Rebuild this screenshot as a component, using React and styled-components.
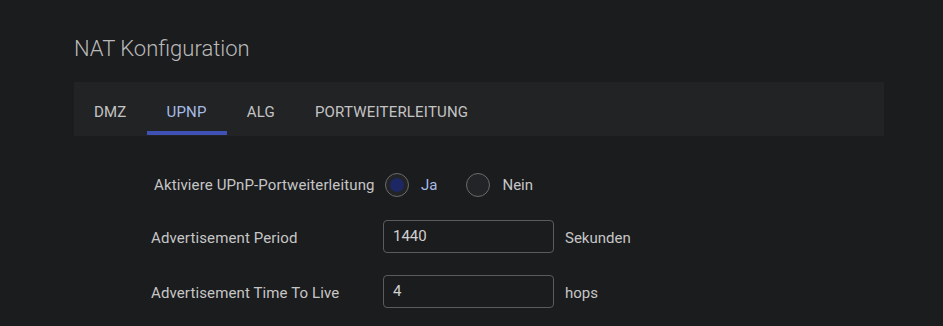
import styled, { createGlobalStyle } from 'styled-components';

const GlobalStyle = createGlobalStyle`
    html, body {
        margin: 0;
        padding: 0;
        background: #1b1c1e;
    }
    body {
        font-family: Roboto, "Liberation Sans", sans-serif;
        width: 943px;
        height: 326px;
        overflow: hidden;
    }
`;

const StyledPage = styled.div`
    padding: 35px 59px 0 74px;
    display: flex;
    flex-direction: column;
`;

const Title = styled.h1`
    margin: 0;
    font-size: 22px;
    font-weight: 300;
    color: #b9b9b9;
    line-height: 28px;
`;

const TabBar = styled.div`
    margin-top: 19px;
    height: 54px;
    background: #222325;
    display: flex;
`;

const Tab = styled.div`
    position: relative;
    padding: 5px 20px 0;
    display: flex;
    align-items: center;
    font-size: 15px;
    font-weight: 400;
    letter-spacing: 0.2px;
    color: ${(props) => (props.$active ? '#a7bbe6' : '#c4c4c4')};
    & > .bar {
        position: absolute;
        left: 0;
        right: 0;
        bottom: 1px;
        height: 4px;
        background: #3f51b5;
    }
`;

const Form = styled.div`
    padding: 34px 0 0 77px;
    display: flex;
    flex-direction: column;
`;

const Row = styled.div`
    display: flex;
    align-items: center;
    height: ${(props) => props.$h || 32}px;
    margin-top: ${(props) => props.$mt || 0}px;
`;

const Label = styled.div`
    width: ${(props) => props.$w || 232}px;
    padding-left: ${(props) => props.$indent || 0}px;
    margin-top: ${(props) => props.$drop || 0}px;
    font-size: 15px;
    letter-spacing: 0.12px;
    color: #c6c6c6;
`;

const RadioGroup = styled.div`
    display: flex;
    align-items: center;
`;

const Radio = styled.div`
    box-sizing: border-box;
    width: 24px;
    height: 24px;
    border-radius: 50%;
    border: 1px solid #6b6b6b;
    background: #232427;
    display: flex;
    align-items: center;
    justify-content: center;
    & > .dot {
        width: 14px;
        height: 14px;
        border-radius: 50%;
        background: #1d2763;
    }
`;

const RadioText = styled.span`
    font-size: 15px;
    margin: 0 29px 0 12px;
    color: ${(props) => (props.$active ? '#a7bbe6' : '#c6c6c6')};
`;

const Input = styled.input`
    box-sizing: border-box;
    width: 171px;
    height: 33px;
    border: 1.5px solid #5a5b5e;
    border-radius: 4px;
    background: #1b1c1e;
    color: #d0d0d0;
    font-family: Roboto, "Liberation Sans", sans-serif;
    font-size: 15px;
    padding: 0 9px;
    outline: none;
`;

const Unit = styled.span`
    margin-left: 11px;
    margin-top: 4px;
    font-size: 15px;
    color: #c6c6c6;
`;

const tabs = ['DMZ', 'UPNP', 'ALG', 'PORTWEITERLEITUNG'];

const App = () => {
    return (
        <StyledPage>
            <GlobalStyle />
            <Title>NAT Konfiguration</Title>
            <TabBar>
                {tabs.map((t) => (
                    <Tab key={t} $active={t === 'UPNP'}>
                        {t}
                        {t === 'UPNP' && <div className='bar'></div>}
                    </Tab>
                ))}
            </TabBar>
            <Form>
                <Row $h={30}>
                    <Label $w={231} $indent={3}>Aktiviere UPnP-Portweiterleitung</Label>
                    <RadioGroup>
                        <Radio><div className='dot'></div></Radio>
                        <RadioText $active>Ja</RadioText>
                        <Radio></Radio>
                        <RadioText>Nein</RadioText>
                    </RadioGroup>
                </Row>
                <Row $mt={20}>
                    <Label $drop={3}>Advertisement Period</Label>
                    <Input defaultValue="1440" />
                    <Unit>Sekunden</Unit>
                </Row>
                <Row $mt={23}>
                    <Label $drop={3}>Advertisement Time To Live</Label>
                    <Input defaultValue="4" />
                    <Unit>hops</Unit>
                </Row>
            </Form>
        </StyledPage>
    );
};

export default App;
